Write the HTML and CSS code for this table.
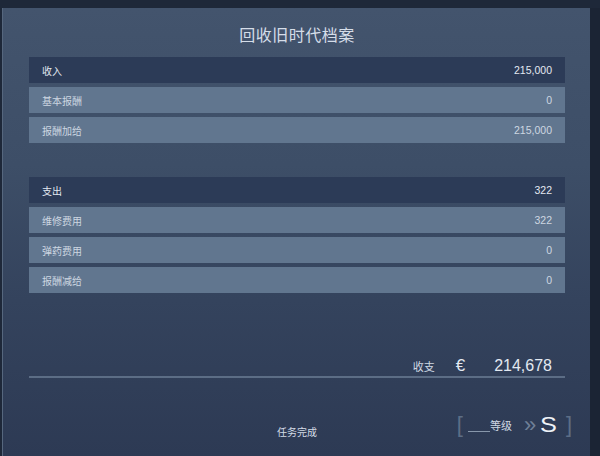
FILE: index.html
```html
<!DOCTYPE html>
<html lang="zh-CN">
<head>
    <meta charset="UTF-8">
    <meta name="viewport" content="width=device-width, initial-scale=1.0">
    <title>回收旧时代档案</title>
    <link rel="stylesheet" href="styles.css">
</head>
<body>
    <div class="screen">
        <div class="panel">
            <h1 class="title">回收旧时代档案</h1>

            <!-- 收入 -->
            <div class="table">
                <div class="row head"><span>收入</span><span>215,000</span></div>
                <div class="row"><span>基本报酬</span><span>0</span></div>
                <div class="row"><span>报酬加给</span><span>215,000</span></div>
            </div>

            <!-- 支出 -->
            <div class="table spend">
                <div class="row head"><span>支出</span><span>322</span></div>
                <div class="row"><span>维修费用</span><span>322</span></div>
                <div class="row"><span>弹药费用</span><span>0</span></div>
                <div class="row"><span>报酬减给</span><span>0</span></div>
            </div>

            <div class="total">
                <span class="total-label">收支</span>
                <span class="currency">€</span>
                <span class="total-value">214,678</span>
            </div>
            <div class="divider"></div>

            <div class="footer">
                <span class="status">任务完成</span>
                <div class="rank">
                    <span class="bracket">[</span>
                    <span class="rank-line"></span>
                    <span class="rank-label">等级</span>
                    <span class="chevrons">»</span>
                    <span class="rank-value">S</span>
                    <span class="bracket">]</span>
                </div>
            </div>
        </div>
        <div class="side"></div>
    </div>
</body>
</html>
```

FILE: styles.css
```css
body {
    margin: 0;
    background-color: #1d2637;
    font-family: "Noto Sans CJK SC", "Liberation Sans", sans-serif;
}

.screen {
    display: flex;
    width: 600px;
    height: 456px;
    padding-top: 8px;
    box-sizing: border-box;
    background-color: #1e2839;
}

.panel {
    width: 588px;
    margin-left: 2px;
    box-sizing: border-box;
    padding: 14px 25px 0 26px;
    background: linear-gradient(to bottom, #43546d 0%, #3d4e67 35%, #34435d 65%, #2d3a54 100%);
    border-left: 1px solid #56677e;
}

.side {
    flex: 1;
    background-color: #1b2434;
}

.title {
    margin: 0 0 11px;
    text-align: center;
    font-size: 16px;
    font-weight: normal;
    line-height: 24px;
    color: #d5dde8;
    letter-spacing: 0.5px;
}

.table {
    display: flex;
    flex-direction: column;
    gap: 4px;
}

.spend {
    margin-top: 34px;
}

.row {
    display: flex;
    justify-content: space-between;
    align-items: center;
    height: 26px;
    padding: 0 13px 0 13px;
    background-color: #61768f;
    color: #cdd6e1;
    font-size: 10px;
}

.row.head {
    background-color: #2c3b57;
    color: #e3e9f1;
}

.row span:last-child {
    font-family: "Liberation Sans", sans-serif;
    font-size: 10.5px;
}

.total {
    display: flex;
    justify-content: flex-end;
    align-items: center;
    margin-top: 64px;
    padding-right: 13px;
    height: 18px;
    color: #e3e9f1;
}

.total-label {
    font-size: 11px;
    color: #cfd8e3;
}

.currency {
    margin-left: 21px;
    font-family: "Liberation Sans", sans-serif;
    font-size: 17px;
}

.total-value {
    margin-left: 29px;
    font-family: "Liberation Sans", sans-serif;
    font-size: 16px;
}

.divider {
    height: 2px;
    margin-top: 1px;
    background-color: #5c6d85;
}

.footer {
    position: relative;
    display: flex;
    justify-content: center;
    margin-top: 34px;
}

.status {
    margin-top: 12px;
    font-size: 10px;
    color: #d3dbe6;
}

.rank {
    position: absolute;
    right: -7px;
    top: 0;
    display: flex;
    align-items: center;
    color: #cfd8e3;
}

.bracket {
    font-family: "Liberation Sans", sans-serif;
    font-size: 22px;
    font-weight: 300;
    color: #5d6e86;
}

.rank-line {
    width: 22px;
    height: 1px;
    margin: 12px 0 0 5px;
    background-color: #8797ab;
}

.rank-label {
    font-size: 11px;
    margin-right: 12px;
}

.chevrons {
    font-family: "Liberation Sans", sans-serif;
    font-size: 22px;
    line-height: 22px;
    color: #6f8098;
    margin-right: 3px;
}

.rank-value {
    font-family: "Liberation Sans", sans-serif;
    font-size: 22px;
    color: #eef2f7;
    transform: scaleX(1.15);
    margin: 0 10px 0 2px;
}
```
